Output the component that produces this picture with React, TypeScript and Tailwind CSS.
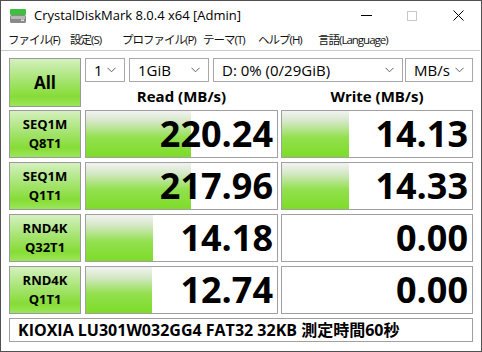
const FONT = '"Open Sans", "Noto Sans CJK JP", sans-serif';

const labelBg = 'bg-[linear-gradient(to_bottom,#d4f0bf_0%,#a6e472_45%,#86dc36_80%,#9be65a_100%)]';
const barBg = 'bg-[linear-gradient(to_bottom,#f2f2f2_0%,#d6e8c8_22%,#92e04e_58%,#7edc28_100%)]';

interface Row {
  top: string;
  bottom: string;
  read: string;
  readBar: number;
  write: string;
  writeBar: number;
}

const rows: Row[] = [
  { top: 'SEQ1M', bottom: 'Q8T1', read: '220.24', readBar: 105, write: '14.13', writeBar: 67 },
  { top: 'SEQ1M', bottom: 'Q1T1', read: '217.96', readBar: 105, write: '14.33', writeBar: 67 },
  { top: 'RND4K', bottom: 'Q32T1', read: '14.18', readBar: 67, write: '0.00', writeBar: 0 },
  { top: 'RND4K', bottom: 'Q1T1', read: '12.74', readBar: 66, write: '0.00', writeBar: 0 },
];

const menu = [
  { label: 'ファイル(F)', w: 'w-[62px]' },
  { label: '設定(S)', w: 'w-[52px]' },
  { label: 'プロファイル(P)', w: 'w-[81px]' },
  { label: 'テーマ(T)', w: 'w-[55px]' },
  { label: 'ヘルプ(H)', w: 'w-[60px]' },
  { label: '言語(Language)', w: 'w-[90px]' },
];

function Chevron() {
  return (
    <svg width="9" height="6" viewBox="0 0 9 6" className="shrink-0">
      <path d="M0.5 0.8 L4.5 4.8 L8.5 0.8" fill="none" stroke="#606060" strokeWidth="1" />
    </svg>
  );
}

function Combo({ text, width }: { text: string; width: string }) {
  return (
    <div className={`${width} h-[24px] border border-[#a8a8a8] bg-white flex items-center justify-between pl-[8px] pr-[8px]`}>
      <span className="text-[15px] text-black leading-none">{text}</span>
      <Chevron />
    </div>
  );
}

function ValueBox({ value, bar, width }: { value: string; bar: number; width: string }) {
  return (
    <div className={`${width} h-[48px] border border-[#a0a0a0] bg-white relative overflow-hidden`}>
      {bar > 0 && (
        <div className={`absolute left-0 top-0 bottom-0 ${barBg}`} style={{ width: bar }} />
      )}
      <div className="relative h-full flex items-center justify-end pr-[4px]">
        <span className="text-[36px] font-bold text-black leading-none">{value}</span>
      </div>
    </div>
  );
}

export default function App() {
  return (
    <div
      className="w-[482px] h-[352px] bg-white border border-[#505050] flex flex-col overflow-hidden"
      style={{ fontFamily: FONT }}
    >
      {/* title bar */}
      <div className="h-[29px] flex items-center pl-[8px]">
        <svg width="18" height="16" viewBox="0 0 18 16" className="mr-[7px]">
          <rect x="1" y="1" width="16" height="6" rx="1" fill="#3fbf3f" />
          <rect x="1" y="7" width="16" height="8" rx="1.5" fill="#8a8a8a" />
          <rect x="2" y="8" width="14" height="3" fill="#b8b8b8" />
          <rect x="12" y="11.5" width="3" height="1.5" fill="#e0e0e0" />
        </svg>
        <span className="text-[13px] text-black">CrystalDiskMark 8.0.4 x64 [Admin]</span>
        <div className="ml-auto flex items-center h-full">
          <div className="w-[46px] h-full flex items-center justify-center">
            <div className="w-[11px] h-[1px] bg-black" />
          </div>
          <div className="w-[46px] h-full flex items-center justify-center">
            <div className="w-[10px] h-[10px] border border-[#c8c8c8]" />
          </div>
          <div className="w-[46px] h-full flex items-center justify-center">
            <svg width="11" height="11" viewBox="0 0 11 11">
              <path d="M0.5 0.5 L10.5 10.5 M10.5 0.5 L0.5 10.5" stroke="#000" strokeWidth="1" />
            </svg>
          </div>
        </div>
      </div>

      {/* menu bar */}
      <div className="h-[20px] flex items-center pl-[7px] text-[11.5px] text-[#111]">
        {menu.map((m) => (
          <span key={m.label} className={`${m.w} whitespace-nowrap tracking-[-1px]`}>{m.label}</span>
        ))}
      </div>
      <div className="h-[1px] bg-[#c8c8c8] mr-[1px]" />

      {/* content */}
      <div className="flex-1 flex flex-col pl-[8px] pt-[7px]">
        <div className="flex gap-[4px]">
          <div className={`w-[72px] h-[49px] border border-[#9a9a9a] ${labelBg} flex items-center justify-center`}>
            <span className="text-[17px] font-bold text-black">All</span>
          </div>
          <div className="flex flex-col">
            <div className="flex">
              <Combo text="1" width="w-[40px]" />
              <div className="w-[4px]" />
              <Combo text="1GiB" width="w-[80px]" />
              <div className="w-[4px]" />
              <Combo text="D: 0% (0/29GiB)" width="w-[190px]" />
              <div className="w-[2px]" />
              <Combo text="MB/s" width="w-[68px]" />
            </div>
            <div className="flex h-[25px] items-end">
              <div className="w-[193px] text-center text-[15px] font-bold text-black leading-[22px]">Read (MB/s)</div>
              <div className="w-[3px]" />
              <div className="w-[192px] text-center text-[15px] font-bold text-black leading-[22px]">Write (MB/s)</div>
            </div>
          </div>
        </div>

        <div className="flex flex-col gap-[4px] mt-[3px]">
          {rows.map((r, i) => (
            <div key={i} className="flex">
              <div className={`w-[72px] h-[48px] border border-[#9a9a9a] ${labelBg} flex flex-col items-center justify-center`}>
                <span className="text-[13px] font-bold text-black leading-[19px]">{r.top}</span>
                <span className="text-[13px] font-bold text-black leading-[19px]">{r.bottom}</span>
              </div>
              <div className="w-[4px]" />
              <ValueBox value={r.read} bar={r.readBar} width="w-[193px]" />
              <div className="w-[3px]" />
              <ValueBox value={r.write} bar={r.writeBar} width="w-[192px]" />
            </div>
          ))}
        </div>

        <div className="mt-[4px] w-[464px] h-[24px] border border-[#a0a0a0] bg-white flex items-center pl-[8px]">
          <span className="text-[16px] font-bold text-black leading-none">KIOXIA LU301W032GG4 FAT32 32KB 測定時間60秒</span>
        </div>
      </div>
    </div>
  );
}
